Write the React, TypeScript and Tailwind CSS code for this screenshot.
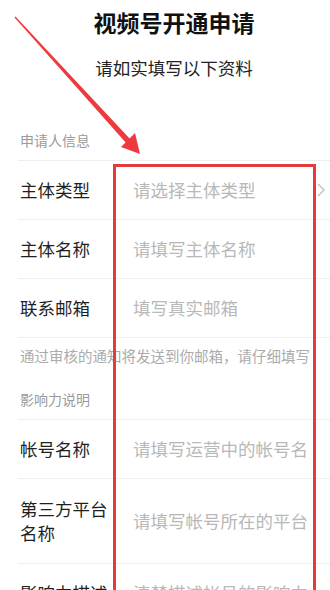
const rowsA = [
  { label: "主体类型", placeholder: "请选择主体类型", arrow: true },
  { label: "主体名称", placeholder: "请填写主体名称" },
  { label: "联系邮箱", placeholder: "填写真实邮箱" },
];

const rowsB = [
  { label: "帐号名称", placeholder: "请填写运营中的帐号名", h: "h-[59px]" },
  { label: "第三方平台名称", placeholder: "请填写帐号所在的平台", h: "h-[85px]" },
  { label: "影响力描述", placeholder: "清楚描述帐号的影响力", h: "h-[59px]" },
];

function Row({
  label,
  placeholder,
  arrow,
  h = "h-[59px]",
}: {
  label: string;
  placeholder: string;
  arrow?: boolean;
  h?: string;
}) {
  return (
    <div className={`ml-[18px] flex items-center border-t border-[#efefef] ${h}`}>
      <div className="w-[97px] shrink-0 pl-[2px] text-[17.5px] leading-[24px] text-[#1f1f1f]">
        {label}
      </div>
      <div className="ml-[18px] w-[176px] shrink-0 overflow-hidden whitespace-nowrap text-[17.5px] leading-[24px] text-[#b8b8b8]">
        {placeholder}
      </div>
      {arrow && (
        <svg width="10" height="14" viewBox="0 0 10 14" className="ml-[7px] shrink-0">
          <polyline points="2,1 8,7 2,13" fill="none" stroke="#bdbdbd" strokeWidth="1.3" />
        </svg>
      )}
    </div>
  );
}

export default function App() {
  return (
    <div className="relative h-[590px] w-[330px] overflow-hidden bg-white font-['Noto_Sans_CJK_SC','Noto_Sans',sans-serif]">
      <div className="pl-[18px] text-center">
        <div className="mt-[7px] text-[23px] font-bold leading-[30px] text-[#111]">视频号开通申请</div>
        <div className="mt-[19px] text-[17.5px] leading-[24px] text-[#222]">请如实填写以下资料</div>
      </div>

      <div className="mt-[50px] pb-[10px] pl-[20px] text-[14px] leading-[20px] text-[#9a9a9a]">申请人信息</div>

      {rowsA.map((r) => (
        <Row key={r.label} {...r} />
      ))}

      <div className="border-t border-[#efefef] ml-[18px] pt-[8px] pl-[2px] whitespace-nowrap text-[14.5px] leading-[20px] text-[#ababab]">
        通过审核的通知将发送到你邮箱，请仔细填写
      </div>

      <div className="mt-[23px] pb-[10px] pl-[20px] text-[14px] leading-[20px] text-[#9a9a9a]">影响力说明</div>

      {rowsB.map((r) => (
        <Row key={r.label} {...r} />
      ))}

      {/* annotation overlay */}
      <div className="absolute left-[113px] top-[164px] h-[440px] w-[203px] border-[3px] border-[#e43b3d]" />
      <svg className="absolute left-0 top-0" width="330" height="590" viewBox="0 0 330 590">
        <polygon points="14.5,17.5 15.5,16.5 131,140 127,144" fill="#ee3a3f" />
        <polygon points="140,154 121,147 135,133" fill="#ee3a3f" />
      </svg>
    </div>
  );
}
